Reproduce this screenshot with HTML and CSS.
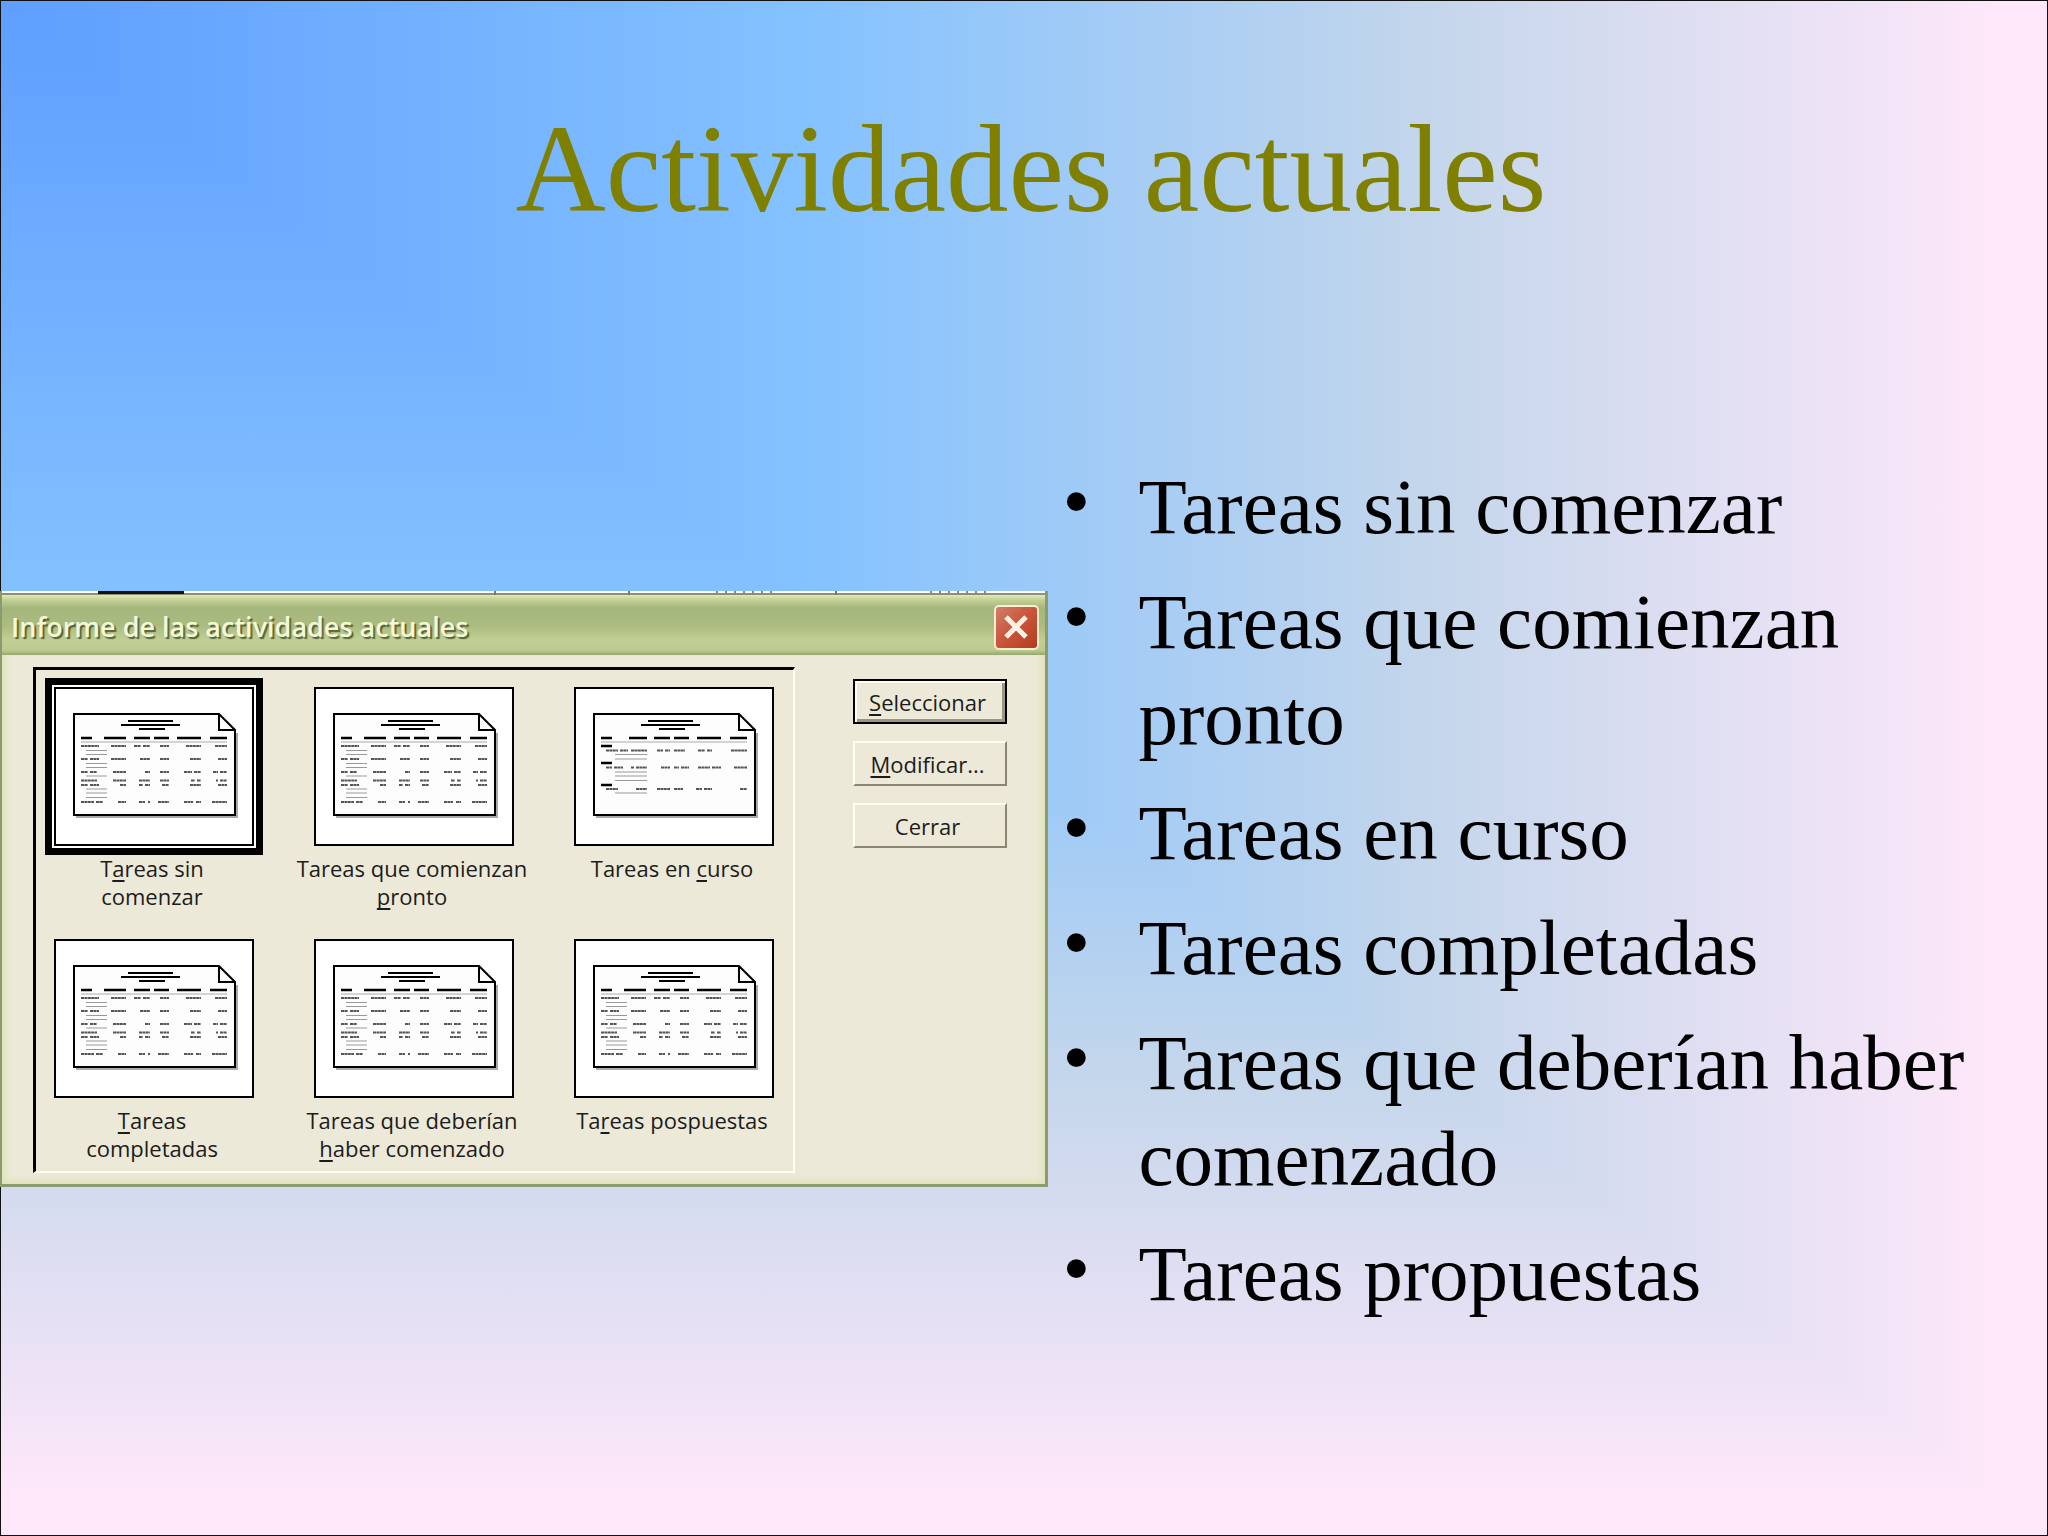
FILE: index.html
```html
<!DOCTYPE html>
<html lang="es">
<head>
    <meta charset="UTF-8">
    <meta name="viewport" content="width=device-width, initial-scale=1.0">
    <title>Actividades actuales</title>
    <link rel="stylesheet" href="styles.css">
</head>
<body>
    <!-- Miniaturas de los informes -->
    <svg class="symbols" aria-hidden="true">
        <g id="page">
            <path d="M22 130H183V46" fill="none" stroke="#aaa" stroke-width="2"/>
            <path d="M20 27H165L181 43V128H20Z" fill="#fdfdfd" stroke="#000" stroke-width="2"/>
            <path d="M165 27V43H181" fill="none" stroke="#000" stroke-width="2"/>
            <path d="M74 34H119M67 38H126M85 42H111" stroke="#000" stroke-width="2"/>
            <path d="M27 55H173" stroke="#aaa" stroke-width="1"/>
        </g>
        <symbol id="report-full" viewBox="2 2 196 155">
            <use href="#page"/>
            <path d="M27 51H38M50 51H72M80 51H96M100 51H115M123 51H147M156 51H173" stroke="#000" stroke-width="2.4"/>
            <path d="M27 59H45M57 59H72M80 59H87M89 59H96M106 59H115M132 59H147M161 59H173
                     M27 72H34M36 72H45M57 72H72M86 72H96M106 72H115M136 72H147M164 72H173
                     M27 85H34M36 85H43M59 85H72M91 85H96M106 85H115M130 85H138M140 85H147M159 85H164M166 85H173
                     M27 93.5H43M59 93.5H72M85 93.5H96M106 93.5H115M137 93.5H141M143 93.5H147M162 93.5H164M166 93.5H173
                     M27 98H34M36 98H45M66 98H72M85 98H89M91 98H96M108 98H115M136 98H147M164 98H173
                     M27 115H40M42 115H49M64 115H72M85 115H91M94 115H96M104 115H115M130 115H139M142 115H147M158 115H173" stroke="#555" stroke-width="1.8" stroke-dasharray="3 .4"/>
            <path d="M32 63.5H53M32 67.5H53M32 76.5H53M32 80.5H53M32 89H53M32 102H53M32 106H53M32 110.5H53" stroke="#999" stroke-width="1.2"/>
        </symbol>
        <symbol id="report-groups" viewBox="2 2 196 155">
            <use href="#page"/>
            <path d="M27 51H38M55 51H73M80 51H96M100 51H115M123 51H147M156 51H173M27 59H38M27 76H38M27 98H38" stroke="#000" stroke-width="2.4"/>
            <path d="M32 63.5H44M46 63.5H54M57 63.5H73M83 63.5H89M91 63.5H96M100 63.5H111M124 63.5H131M133 63.5H138M157 63.5H173
                     M32 80.5H38M40 80.5H49M57 80.5H60M62 80.5H73M87 80.5H96M100 80.5H105M107 80.5H115M124 80.5H136M138 80.5H147M160 80.5H173
                     M32 102H44M62 102H73M83 102H96M100 102H109M122 102H128M130 102H138M166 102H173" stroke="#555" stroke-width="1.8" stroke-dasharray="3 .4"/>
            <path d="M41 67.5H73M41 72H73M41 85H73M41 89H73M41 93.5H73M41 106H73" stroke="#999" stroke-width="1.2"/>
        </symbol>
    </svg>

    <div class="slide">
        <h1>Actividades actuales</h1>
        <main class="content">
            <section class="dialog" role="dialog" aria-labelledby="dialog-title">
                <div class="backdrop-edge"></div>
                <header class="title-bar">
                    <h2 id="dialog-title">Informe de las actividades actuales</h2>
                    <button class="close-button" type="button" aria-label="Cerrar ventana">
                        <svg viewBox="0 0 24 24"><path d="M4 4L20 20M20 4L4 20" stroke="#fff3e4" stroke-width="4"/></svg>
                    </button>
                </header>
                <div class="dialog-body">
                    <div class="reports">
                        <button class="report selected" type="button">
                            <svg class="thumb"><use href="#report-full"/></svg>
                            <span class="label">T<u>a</u>reas sin<br>comenzar</span>
                        </button>
                        <button class="report" type="button">
                            <svg class="thumb"><use href="#report-full"/></svg>
                            <span class="label">Tareas que comienzan<br><u>p</u>ronto</span>
                        </button>
                        <button class="report" type="button">
                            <svg class="thumb"><use href="#report-groups"/></svg>
                            <span class="label">Tareas en <u>c</u>urso</span>
                        </button>
                        <button class="report" type="button">
                            <svg class="thumb"><use href="#report-full"/></svg>
                            <span class="label"><u>T</u>areas<br>completadas</span>
                        </button>
                        <button class="report" type="button">
                            <svg class="thumb"><use href="#report-full"/></svg>
                            <span class="label">Tareas que deberían<br><u>h</u>aber comenzado</span>
                        </button>
                        <button class="report" type="button">
                            <svg class="thumb"><use href="#report-full"/></svg>
                            <span class="label">Ta<u>r</u>eas pospuestas</span>
                        </button>
                    </div>
                    <div class="actions">
                        <button class="action default" type="button"><u>S</u>eleccionar</button>
                        <button class="action" type="button"><u>M</u>odificar...</button>
                        <button class="action" type="button">Cerrar</button>
                    </div>
                </div>
            </section>
            <ul class="topics">
                <li>Tareas sin comenzar</li>
                <li>Tareas que comienzan pronto</li>
                <li>Tareas en curso</li>
                <li>Tareas completadas</li>
                <li>Tareas que deberían haber comenzado</li>
                <li>Tareas propuestas</li>
            </ul>
        </main>
    </div>
</body>
</html>
```
FILE: styles.css
```css
* {
    box-sizing: border-box;
}

body {
    margin: 0;
    font-family: "Liberation Serif", serif;
    color: #000;
}

.symbols {
    position: absolute;
    width: 0;
    height: 0;
}

/* El degradado nace en la esquina superior izquierda y avanza en escuadra */
.slide {
    position: relative;
    min-height: 100vh;
    padding-top: 96px;
    background: linear-gradient(to right, #5e9eff, #85c2ff 40%, #c4d6eb 70%, #ffe8fa 98%);
}

.slide::before {
    content: "";
    position: absolute;
    inset: 0;
    background: linear-gradient(to bottom, #5e9eff, #85c2ff 40%, #c4d6eb 70%, #ffe8fa 98%);
    clip-path: polygon(0 0, 100% 100%, 0 100%);
}

.slide::after {
    content: "";
    position: absolute;
    inset: 0;
    border: 1px solid #111;
    pointer-events: none;
}

h1 {
    position: relative;
    margin: 0;
    padding-left: 14px;
    font-size: 125px;
    line-height: 146px;
    font-weight: normal;
    text-align: center;
    color: #808000;
}

.content {
    position: relative;
    z-index: 1;
    display: flex;
    align-items: flex-start;
    padding-top: 217px;
}

.dialog {
    flex: 0 0 auto;
    width: 51.15%;
    margin-top: 132px;
    font-family: "Open Sans", "Noto Sans", sans-serif;
    font-size: 22px;
    line-height: 28px;
    background-color: #ece9d8;
    border: solid #8d9b6c;
    border-width: 0 3px 3px 2px;
}

.backdrop-edge {
    height: 4px;
    background:
        linear-gradient(#111, #111) 96px 0 / 86px 3px no-repeat,
        linear-gradient(#777, #777) 492px 0 / 2px 4px no-repeat,
        linear-gradient(#777, #777) 626px 0 / 2px 4px no-repeat,
        repeating-linear-gradient(to right, #888 0 2px, transparent 2px 9px) 714px 0 / 62px 4px no-repeat,
        linear-gradient(#777, #777) 833px 0 / 2px 4px no-repeat,
        repeating-linear-gradient(to right, #888 0 2px, transparent 2px 9px) 928px 0 / 58px 4px no-repeat,
        linear-gradient(#fff 50%, #8d9070 50%);
}

.title-bar {
    display: flex;
    align-items: center;
    justify-content: space-between;
    height: 60px;
    padding: 4px 6px 0 9px;
    background: linear-gradient(#e0ebbb, #c3d196 8%, #a5b67c 22%, #abbb80 50%, #c0cf94 75%, #bccb8f 92%, #97a671);
}

.title-bar h2 {
    margin: 0;
    font-size: 27px;
    font-weight: 600;
    color: #f4f8d8;
    text-shadow: 2px 2px 1px #56653a;
}

.close-button {
    display: flex;
    align-items: center;
    justify-content: center;
    width: 45px;
    height: 45px;
    padding: 0;
    border: 2px solid #fbeed2;
    border-radius: 5px;
    background: linear-gradient(135deg, #cf8069, #c9543a 50%, #b23c1e);
}

.close-button svg {
    width: 30px;
    height: 30px;
}

.dialog-body {
    display: flex;
    align-items: flex-start;
    justify-content: space-between;
    padding: 12px 38px 11px 31px;
    box-shadow: inset 0 -8px 6px -4px #dfe4bc, inset 8px 0 6px -4px #dfe4bc, inset -8px 0 6px -4px #dfe4bc;
}

.reports {
    display: grid;
    grid-template-columns: repeat(3, 200px);
    gap: 28px 60px;
    padding: 17px 19px 8px 18px;
    border: solid;
    border-width: 3px 2px 2px 3px;
    border-color: #000 #fffef0 #fffef0 #000;
}

.report {
    display: flex;
    flex-direction: column;
    align-items: center;
    justify-content: flex-start;
    gap: 8px;
    padding: 0;
    border: none;
    background: none;
    font: inherit;
    color: #1c1c1c;
}

.thumb {
    width: 200px;
    height: 159px;
    border: 2px solid #000;
    background-color: #fff;
}

.report.selected .thumb {
    box-shadow: 0 0 0 2px #fff, 0 0 0 9px #000;
}

.label {
    min-height: 57px;
    margin: 0 -30px;
    padding-right: 4px;
    white-space: nowrap;
}

.label u,
.action u {
    text-underline-offset: 3px;
    text-decoration-thickness: 2px;
    text-decoration-skip-ink: none;
}

.actions {
    display: flex;
    flex-direction: column;
    gap: 17px;
    padding-top: 12px;
}

.action {
    width: 154px;
    height: 45px;
    padding: 0 4px 0 0;
    border: solid;
    border-width: 2px;
    border-color: #fffef0 #8a8672 #8a8672 #fffef0;
    background-color: #ece9d8;
    font: inherit;
    color: #1c1c1c;
}

.action.default {
    border-color: #000;
    box-shadow: inset 2px 2px 0 #fffef0, inset -3px -3px 0 #9a967f;
}

.topics {
    flex: 1;
    margin: 0;
    padding: 0 20px 0 15px;
    list-style: none;
    font-size: 79px;
    line-height: 96px;
}

.topics li {
    display: grid;
    grid-template-columns: 76px 1fr;
    margin-bottom: 19px;
}

.topics li::before {
    content: "•";
    line-height: 86px;
}
```
